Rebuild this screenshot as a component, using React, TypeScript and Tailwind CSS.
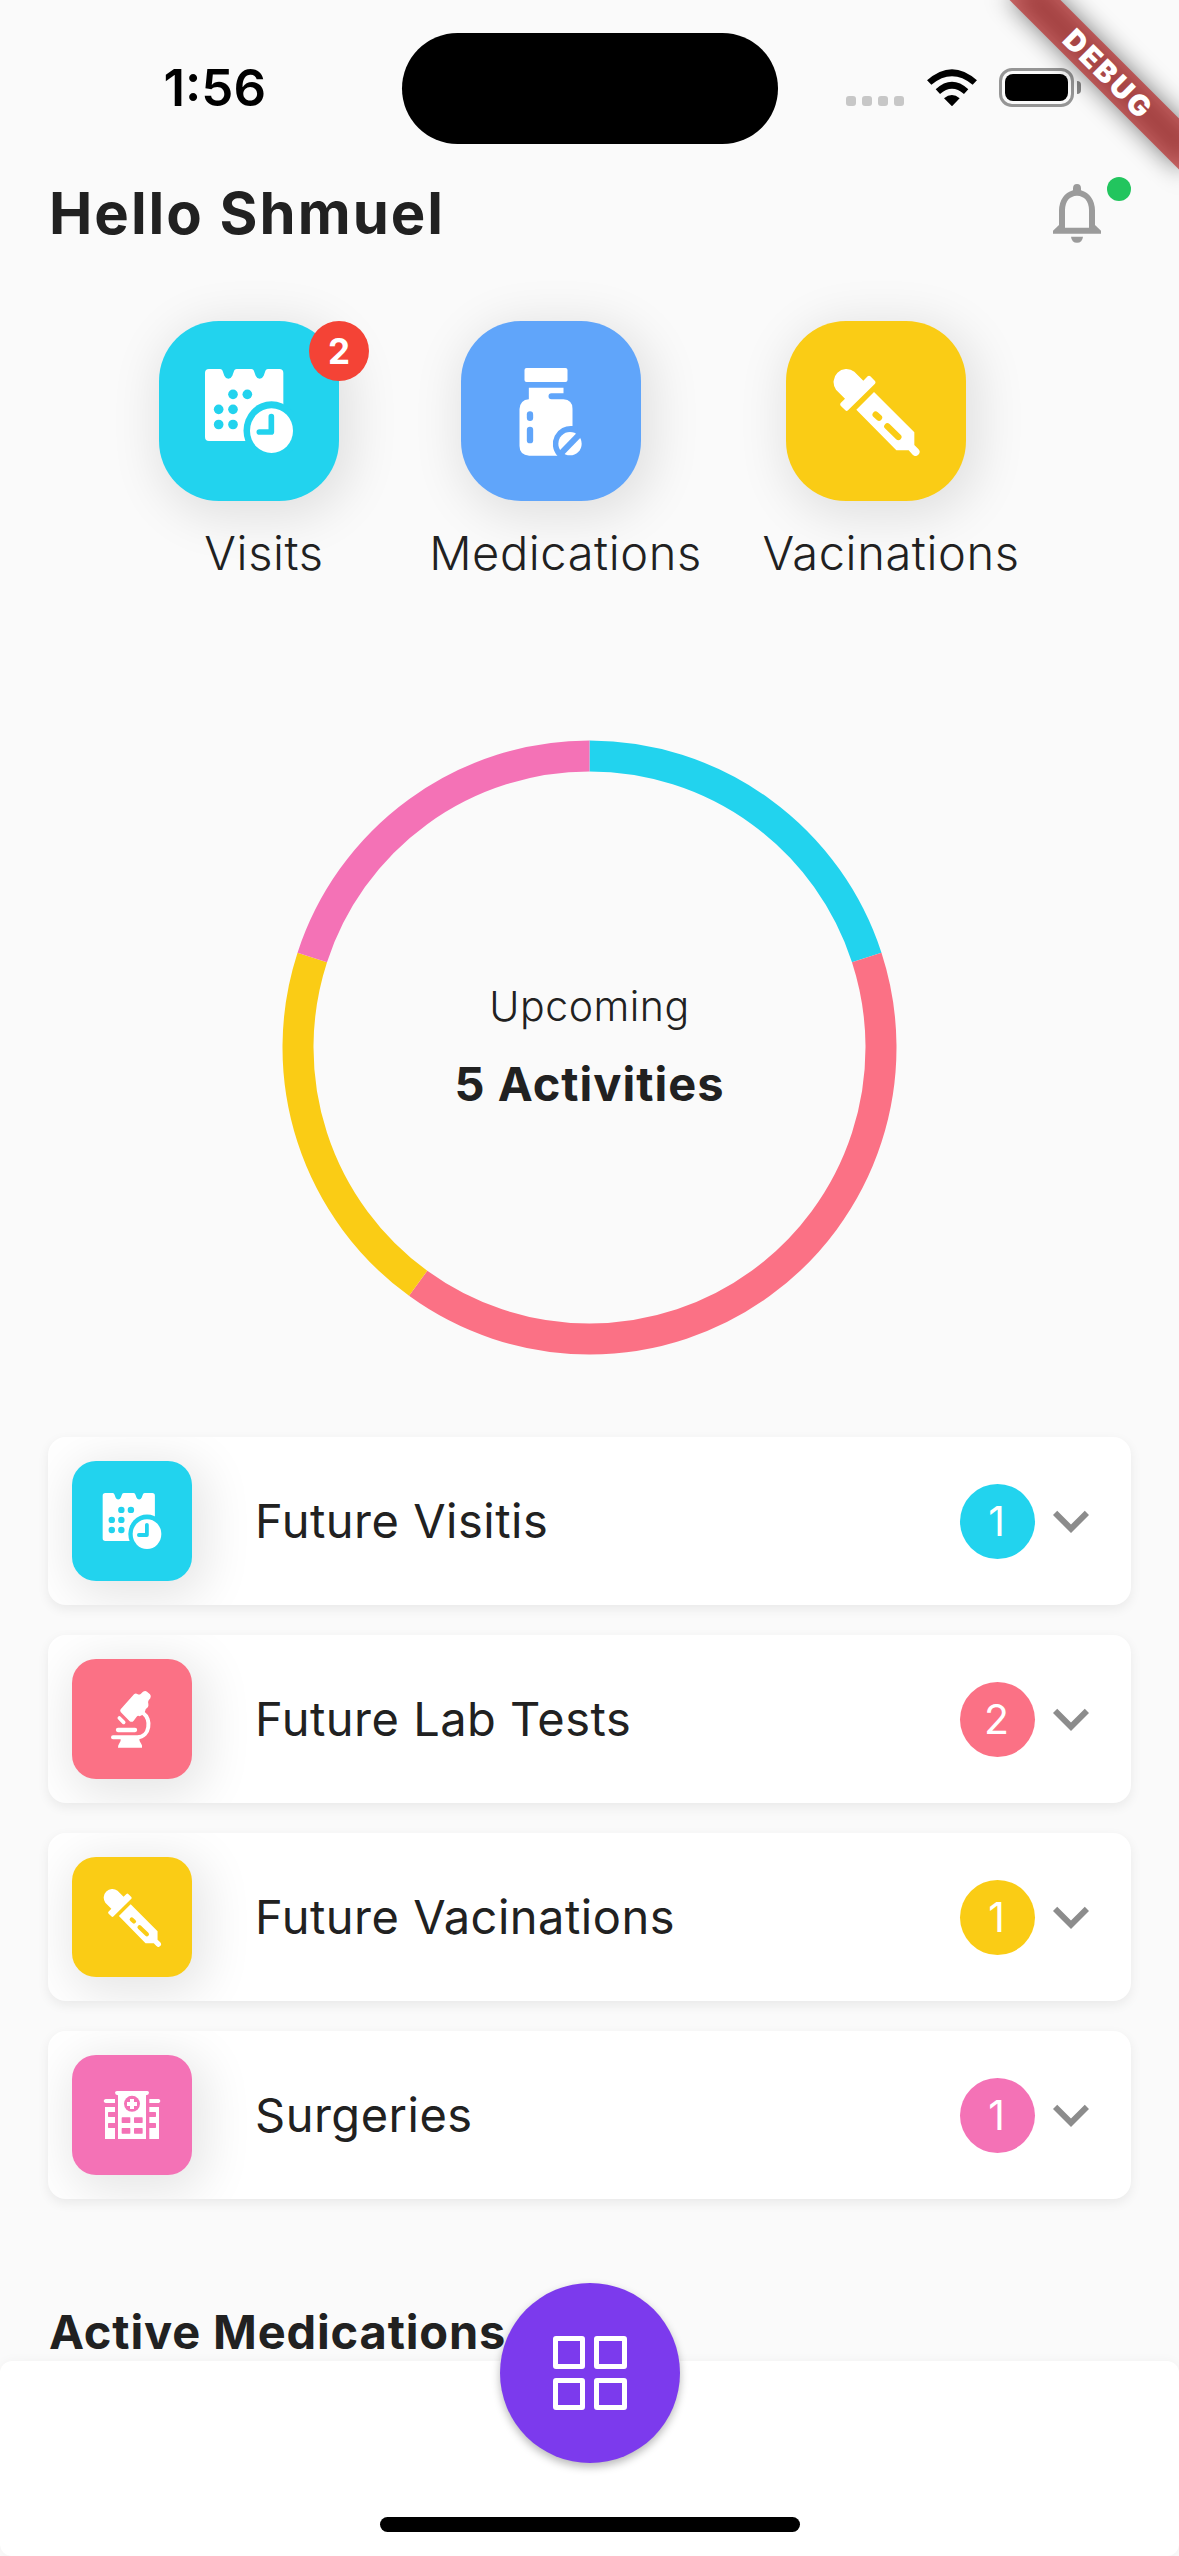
import React from "react";

type IconProps = { className?: string };

/* Icons are white; cut-outs take currentColor, which is the tile's own colour. */
function CalendarClock({ className }: IconProps) {
  return (
    <svg viewBox="222 228 270 270" className={className} fill="#fff">
      <path d="M237 237h33q7 0 9 9l4 11q4 9 12 9t12-9l4-11q2-9 9-9h44q7 0 9 9l4 11q4 9 12 9t12-9l4-11q2-9 9-9h34q12 0 12 12v204H237q-12 0-12-12V249q0-12 12-12z" />
      <g fill="currentColor">
        <circle cx="309" cy="313" r="14.5" />
        <circle cx="352" cy="313" r="14.5" />
        <circle cx="266" cy="358" r="14.5" />
        <circle cx="309" cy="358" r="14.5" />
        <circle cx="266" cy="403.500" r="14.5" />
        <circle cx="309" cy="403.500" r="14.5" />
      </g>
      <ellipse cx="424.500" cy="422" rx="84" ry="88" fill="currentColor" />
      <ellipse cx="424.500" cy="422" rx="64.500" ry="67" />
      <path d="M424 380v46h-36" fill="none" stroke="currentColor" strokeWidth="17" strokeLinecap="round" strokeLinejoin="round" />
    </svg>
  );
}

function PillBottle({ className }: IconProps) {
  return (
    <svg viewBox="256.500 228 270 270" className={className} fill="#fff">
      <rect x="312" y="234" width="129" height="42" rx="6" />
      <path d="M325 293h104v17h-36a9 9 0 0 0 0 18h36q27 2 27 28v141H326q-29-2-29-29V357q2-27 28-29z" />
      <g fill="currentColor">
        <rect x="319" y="364" width="19" height="29" rx="9.500" />
        <rect x="319" y="410" width="19" height="50" rx="9.500" />
        <path d="M457 408A54 54 0 0 0 411 498H470V408z" />
      </g>
      <circle cx="448.500" cy="461" r="35" />
      <path d="M418 494l62-64" stroke="currentColor" strokeWidth="18" />
    </svg>
  );
}

function Dropper({ className }: IconProps) {
  return (
    <svg viewBox="273 228 270 270" className={className} fill="#fff">
      <path d="M343 245l27 27 13-13q4-3 8 0l14 14q3 4 0 8l-81 80q-4 4-8 0l-14-14q-3-4 0-8l13-13-27-27A39 39 0 0 1 343 245z" />
      <path d="M402 306L523 427v38l12 12a12 12 0 0 1-17 17L506 481H469L349 359z" />
      <path d="M407 374l10 9M442 409l33 32" stroke="currentColor" strokeWidth="19" strokeLinecap="round" />
    </svg>
  );
}

function Microscope({ className }: IconProps) {
  return (
    <svg viewBox="216 177 180 180" className={className} fill="#fff">
      <path d="M312 193q5-4 10-1 5 3 10 0l7-7q7-4 12 0l9 8q5 6 1 12l-5 6q-3 5-1 10 1 5-1 10l-7 7q-1 5-3 9l-6 7-9 5q-5-4-9 1l-9 12q-5 6-12 2l-27-28q-3-4 0-8z" />
      <path d="M268 264l13 13" stroke="#fff" strokeWidth="11" strokeLinecap="round" />
      <path d="M341 251C364 266 361 321 322 322H249" fill="none" stroke="#fff" strokeWidth="12" strokeLinecap="round" />
      <path d="M264 300h51" stroke="#fff" strokeWidth="13" strokeLinecap="round" />
      <path d="M272 326h56q-1 8 6 16 3 4 2 11H264q0-7 3-11 7-8 5-16z" />
    </svg>
  );
}

function Hospital({ className }: IconProps) {
  return (
    <svg viewBox="216 165 180 180" className={className} fill="#fff">
      <path d="M261 183h91q5 0 5 5 0 6-9 8V327H264V196q-9-2-9-8 0-5 6-5z" />
      <path d="M227 207h28v12h-28q-6-1-6-6t6-6zM358 207h28q5 1 5 6t-5 6h-28zM225 231h30v96h-30zM358 231h29v96h-29z" />
      <circle cx="306" cy="221.500" r="24" fill="currentColor" />
      <path d="M306 207v30M291 222h30" stroke="#fff" strokeWidth="12" />
      <g fill="currentColor">
        <rect x="275" y="262" width="26" height="17" rx="2" />
        <rect x="312" y="262" width="26" height="17" rx="2" />
        <rect x="275" y="294" width="26" height="17" rx="2" />
        <rect x="312" y="294" width="26" height="17" rx="2" />
        <rect x="234" y="246" width="23" height="15" rx="2" />
        <rect x="234" y="279" width="23" height="15" rx="2" />
        <rect x="355" y="246" width="23" height="15" rx="2" />
        <rect x="355" y="279" width="23" height="15" rx="2" />
      </g>
    </svg>
  );
}

function StatusBar() {
  return (
    <div className="flex h-[177px] items-center">
      <div className="-mt-[2px] w-[401.500px] pl-[28px] text-center text-[51px] leading-none font-semibold text-black">1:56</div>
      <div className="h-[111px] w-[376px] rounded-full bg-black" />
      <div className="mt-[25px] ml-[68.500px] flex gap-[6px]">
        {[0, 1, 2, 3].map((i) => (
          <span key={i} className="size-[10px] rounded-[3px] bg-[#c7c7c7]" />
        ))}
      </div>
      <svg viewBox="440 206 150 113" className="-mt-[2px] ml-[23px] h-[37.600px] w-[50px]">
        <path d="M440 240Q515 173 590 240L577 253Q515 202 453 253zM466 267Q515 222 564 267L551 281Q515 250 479 281zM491 294Q515 274 538 294L515 318z" fill="#000" />
      </svg>
      <div className="-mt-[2px] ml-[22px] flex items-center gap-[3px]">
        <div className="h-[39px] w-[75px] rounded-[13px] border-[3px] border-[#959595] p-[3px]">
          <div className="h-full w-full rounded-[8px] bg-black" />
        </div>
        <div className="h-[13px] w-[4px] rounded-r-full bg-[#858585]" />
      </div>
    </div>
  );
}

function DebugBanner() {
  return (
    <div className="pointer-events-none absolute top-0 right-0 size-[260px] overflow-hidden">
      <div className="absolute top-[54px] right-[-48px] h-[36px] w-[240px] rotate-45">
        <div className="absolute inset-0 bg-black/50 blur-[12px]" />
        <div className="absolute inset-0 flex items-center justify-center bg-[#b71c1c]/63 pl-[5px] text-[29px] leading-none font-black tracking-[2.500px] text-white">
          DEBUG
        </div>
      </div>
    </div>
  );
}

function Header() {
  return (
    <div className="flex h-[72px] items-center justify-between pr-[48px] pl-[49px]">
      <h1 className="text-[58px] leading-none font-bold tracking-[2px]">Hello Shmuel</h1>
      <div className="relative h-[59px] w-[78px]">
        <svg viewBox="819 553 144 177" className="h-[59px] w-[48px]" fill="#9b9b9b">
          <path d="M819 693l18-17v-44q2-47 42-60v-6q0-13 12-13t12 13v6q40 13 42 60v44l18 17v9H819zM855 684h72v-54q-2-40-36-42-34 2-36 42z" fillRule="evenodd" />
          <path d="M873 711h36q-2 18-18 18t-18-18z" />
        </svg>
        <span className="absolute -top-[7px] right-0 size-[24px] rounded-full bg-[#22c55e]" />
      </div>
    </div>
  );
}

const shortcuts = [
  { label: "Visits", Icon: CalendarClock, tile: "bg-[#22d3ee] text-[#22d3ee]", badge: 2, width: "w-[210px]" },
  { label: "Medications", Icon: PillBottle, tile: "bg-[#60a5fa] text-[#60a5fa]", badge: 0, width: "w-[273px]" },
  { label: "Vacinations", Icon: Dropper, tile: "bg-[#facc15] text-[#facc15]", badge: 0, width: "w-[258px]" },
];

function Shortcuts() {
  return (
    <div className="mt-[72px] flex justify-center gap-[60px]">
      {shortcuts.map(({ label, Icon, tile, badge, width }) => (
        <div key={label} className={`flex flex-col items-center ${width}`}>
          <div className="relative w-[210px]">
            <div className={`flex size-[180px] items-center justify-center rounded-[60px] shadow-[6px_9px_48px_8px_rgba(0,0,0,0.1)] ${tile}`}>
              <Icon className="size-[90px]" />
            </div>
            {badge > 0 && (
              <span className="absolute top-0 right-0 flex size-[60px] items-center justify-center rounded-full bg-[#f44336] text-[35px] leading-none font-bold text-white">
                {badge}
              </span>
            )}
          </div>
          <span className="mt-[22px] text-[47px] leading-[60px] font-light tracking-[0.600px] whitespace-nowrap">{label}</span>
        </div>
      ))}
    </div>
  );
}

const segments = [
  { from: 0, to: 0.2, color: "#22d3ee" },
  { from: 0.2, to: 0.6, color: "#fb7185" },
  { from: 0.6, to: 0.8, color: "#facc15" },
  { from: 0.8, to: 1, color: "#f472b6" },
];

function arc(from: number, to: number) {
  const point = (t: number) => {
    const a = t * 2 * Math.PI;
    return `${(307.5 + 291.5 * Math.sin(a)).toFixed(2)} ${(307.5 - 291.5 * Math.cos(a)).toFixed(2)}`;
  };
  return `M${point(from)}A291.5 291.5 0 0 1 ${point(to)}`;
}

function ActivityRing() {
  return (
    <div className="mt-[157px] grid h-[614px] place-items-center">
      <svg viewBox="0 0 615 615" className="col-start-1 row-start-1 size-[615px]">
        {segments.map((s) => (
          <path key={s.color} d={arc(s.from, s.to)} fill="none" stroke={s.color} strokeWidth="31" />
        ))}
      </svg>
      <div className="col-start-1 row-start-1 mb-[5px] flex flex-col items-center">
        <span className="text-[41px] leading-[60px] font-light tracking-[0.5px]">Upcoming</span>
        <span className="mt-[18px] text-[47px] leading-[60px] font-bold tracking-[1px]">5 Activities</span>
      </div>
    </div>
  );
}

const categories = [
  { label: "Future Visitis", Icon: CalendarClock, tile: "bg-[#22d3ee] text-[#22d3ee]", count: 1 },
  { label: "Future Lab Tests", Icon: Microscope, tile: "bg-[#fb7185] text-[#fb7185]", count: 2 },
  { label: "Future Vacinations", Icon: Dropper, tile: "bg-[#facc15] text-[#facc15]", count: 1 },
  { label: "Surgeries", Icon: Hospital, tile: "bg-[#f472b6] text-[#f472b6]", count: 1 },
];

function CategoryList() {
  return (
    <div className="mt-[83px] flex flex-col gap-[30px] px-[48px]">
      {categories.map(({ label, Icon, tile, count }) => (
        <div key={label} className="flex h-[168px] items-center overflow-hidden rounded-[18px] bg-white px-[24px] shadow-[0_4px_12px_rgba(0,0,0,0.07)]">
          <div className={`flex size-[120px] items-center justify-center rounded-[24px] shadow-[6px_9px_48px_8px_rgba(0,0,0,0.1)] ${tile}`}>
            <Icon className="size-[60px]" />
          </div>
          <span className="ml-[63px] flex-1 text-[47px] leading-[60px] font-normal tracking-[0.5px]">{label}</span>
          <span className={`flex size-[75px] items-center justify-center rounded-full pr-[2px] ${tile}`}>
            <span className="text-[41px] leading-none font-normal text-white">{count}</span>
          </span>
          <svg viewBox="0 0 24 24" className="size-[72px]" fill="#8c8c8c">
            <path d="M16.590 8.590L12 13.170 7.410 8.590 6 10l6 6 6-6z" />
          </svg>
        </div>
      ))}
    </div>
  );
}

function BottomBar() {
  return (
    <div className="absolute inset-x-0 bottom-0 flex h-[195px] flex-col items-center rounded-[12px] bg-white shadow-[0_0_12px_rgba(0,0,0,0.04)]">
      <button className="-mt-[78px] flex size-[180px] items-center justify-center rounded-full bg-[#7c3aed] shadow-[0_4px_8px_rgba(0,0,0,0.28)]">
        <span className="grid grid-cols-2 gap-[9px]">
          {[0, 1, 2, 3].map((i) => (
            <span key={i} className="size-[32.500px] rounded-[3px] border-[5px] border-white" />
          ))}
        </span>
      </button>
      <div className="mt-[54px] h-[15px] w-[420px] rounded-full bg-black" />
    </div>
  );
}

export default function App() {
  return (
    <div className="relative flex h-[2556px] w-[1179px] flex-col overflow-hidden bg-[#fafafa] font-['Inter',sans-serif] text-[#212121]">
      <StatusBar />
      <Header />
      <Shortcuts />
      <ActivityRing />
      <CategoryList />
      <h2 className="mt-[103px] ml-[49px] text-[47px] leading-[60px] font-bold tracking-[0.850px]">Active Medications</h2>
      <BottomBar />
      <DebugBanner />
    </div>
  );
}
